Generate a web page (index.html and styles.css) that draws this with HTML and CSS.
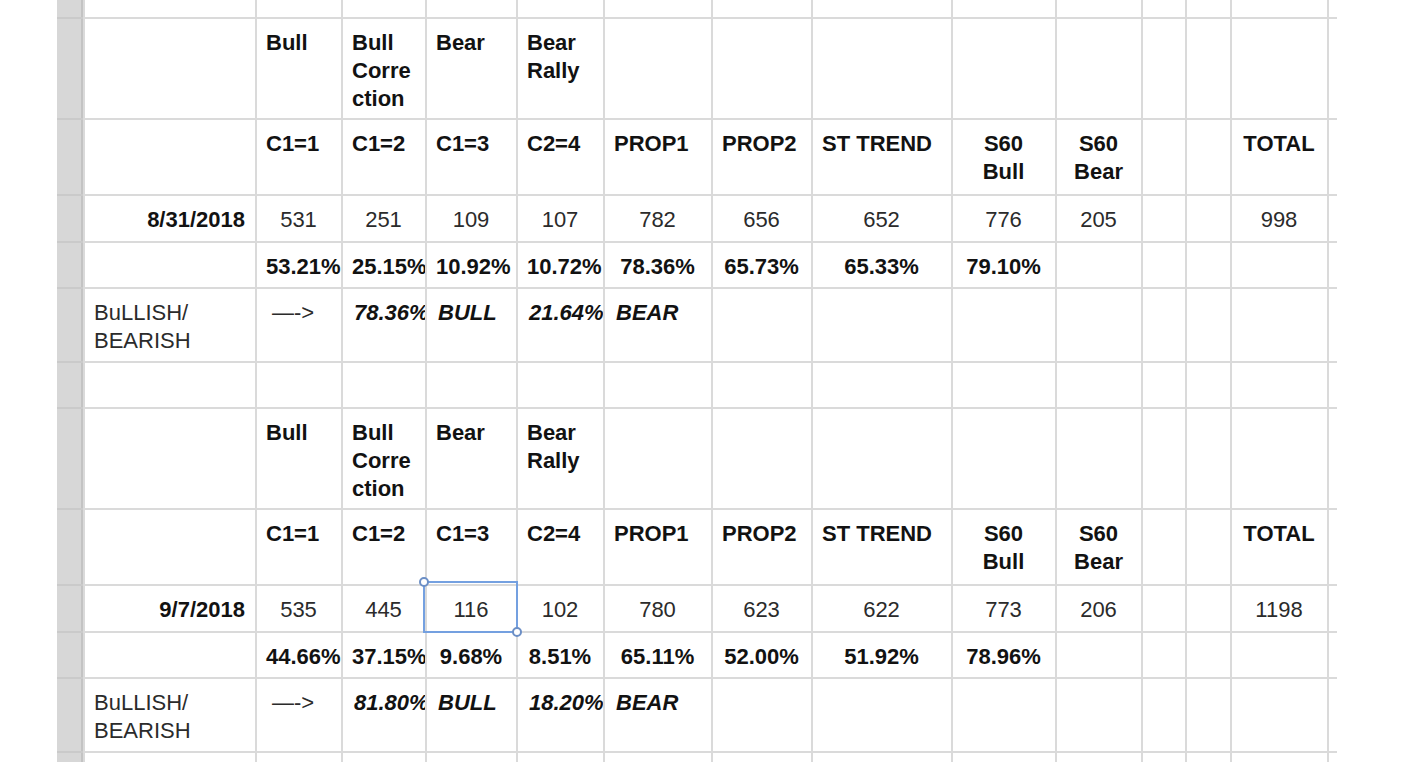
FILE: index.html
```html
<!DOCTYPE html>
<html>
<head>
<meta charset="utf-8">
<title>Sheet</title>
<link rel="stylesheet" href="styles.css">
</head>
<body>
<div class="sheet">
  <!-- row 0 (partial) -->
  <div class="strip"></div><div class="c"></div><div class="c"></div><div class="c"></div><div class="c"></div><div class="c"></div><div class="c"></div><div class="c"></div><div class="c"></div><div class="c"></div><div class="c"></div><div class="c"></div><div class="c"></div><div class="c"></div><div class="c"></div>

  <!-- row 1 -->
  <div class="strip"></div><div class="c"></div>
  <div class="c b">Bull</div><div class="c b">Bull<br>Corre<br>ction</div><div class="c b">Bear</div><div class="c b">Bear<br>Rally</div>
  <div class="c"></div><div class="c"></div><div class="c"></div><div class="c"></div><div class="c"></div><div class="c"></div><div class="c"></div><div class="c"></div><div class="c"></div>

  <!-- row 2 -->
  <div class="strip"></div><div class="c"></div>
  <div class="c b">C1=1</div><div class="c b">C1=2</div><div class="c b">C1=3</div><div class="c b">C2=4</div>
  <div class="c b">PROP1</div><div class="c b">PROP2</div><div class="c b">ST TREND</div>
  <div class="c b mid">S60<br>Bull</div><div class="c b mid">S60<br>Bear</div>
  <div class="c"></div><div class="c"></div><div class="c b mid">TOTAL</div><div class="c"></div>

  <!-- row 3 -->
  <div class="strip"></div><div class="c b end">8/31/2018</div>
  <div class="c n">531</div><div class="c n">251</div><div class="c n">109</div><div class="c n">107</div>
  <div class="c n">782</div><div class="c n">656</div><div class="c n">652</div><div class="c n">776</div><div class="c n">205</div>
  <div class="c"></div><div class="c"></div><div class="c n">998</div><div class="c"></div>

  <!-- row 4 -->
  <div class="strip"></div><div class="c"></div>
  <div class="c b mid">53.21%</div><div class="c b mid">25.15%</div><div class="c b mid">10.92%</div><div class="c b mid">10.72%</div>
  <div class="c b mid">78.36%</div><div class="c b mid">65.73%</div><div class="c b mid">65.33%</div><div class="c b mid">79.10%</div>
  <div class="c"></div><div class="c"></div><div class="c"></div><div class="c"></div><div class="c"></div>

  <!-- row 5 -->
  <div class="strip"></div><div class="c r">BuLLISH/<br>BEARISH</div>
  <div class="c r arrow">—-&gt;</div><div class="c bi">78.36%</div><div class="c bi">BULL</div><div class="c bi">21.64%</div><div class="c bi">BEAR</div>
  <div class="c"></div><div class="c"></div><div class="c"></div><div class="c"></div><div class="c"></div><div class="c"></div><div class="c"></div><div class="c"></div>

  <!-- row 6 (blank) -->
  <div class="strip"></div><div class="c"></div><div class="c"></div><div class="c"></div><div class="c"></div><div class="c"></div><div class="c"></div><div class="c"></div><div class="c"></div><div class="c"></div><div class="c"></div><div class="c"></div><div class="c"></div><div class="c"></div><div class="c"></div>

  <!-- row 7 -->
  <div class="strip"></div><div class="c"></div>
  <div class="c b">Bull</div><div class="c b">Bull<br>Corre<br>ction</div><div class="c b">Bear</div><div class="c b">Bear<br>Rally</div>
  <div class="c"></div><div class="c"></div><div class="c"></div><div class="c"></div><div class="c"></div><div class="c"></div><div class="c"></div><div class="c"></div><div class="c"></div>

  <!-- row 8 -->
  <div class="strip"></div><div class="c"></div>
  <div class="c b">C1=1</div><div class="c b">C1=2</div><div class="c b">C1=3</div><div class="c b">C2=4</div>
  <div class="c b">PROP1</div><div class="c b">PROP2</div><div class="c b">ST TREND</div>
  <div class="c b mid">S60<br>Bull</div><div class="c b mid">S60<br>Bear</div>
  <div class="c"></div><div class="c"></div><div class="c b mid">TOTAL</div><div class="c"></div>

  <!-- row 9 -->
  <div class="strip"></div><div class="c b end">9/7/2018</div>
  <div class="c n">535</div><div class="c n">445</div>
  <div class="c n sel">116<span class="selbox"><span class="knob tl"></span><span class="knob br"></span></span></div>
  <div class="c n">102</div>
  <div class="c n">780</div><div class="c n">623</div><div class="c n">622</div><div class="c n">773</div><div class="c n">206</div>
  <div class="c"></div><div class="c"></div><div class="c n">1198</div><div class="c"></div>

  <!-- row 10 -->
  <div class="strip"></div><div class="c"></div>
  <div class="c b mid">44.66%</div><div class="c b mid">37.15%</div><div class="c b mid">9.68%</div><div class="c b mid">8.51%</div>
  <div class="c b mid">65.11%</div><div class="c b mid">52.00%</div><div class="c b mid">51.92%</div><div class="c b mid">78.96%</div>
  <div class="c"></div><div class="c"></div><div class="c"></div><div class="c"></div><div class="c"></div>

  <!-- row 11 -->
  <div class="strip"></div><div class="c r">BuLLISH/<br>BEARISH</div>
  <div class="c r arrow">—-&gt;</div><div class="c bi">81.80%</div><div class="c bi">BULL</div><div class="c bi">18.20%</div><div class="c bi">BEAR</div>
  <div class="c"></div><div class="c"></div><div class="c"></div><div class="c"></div><div class="c"></div><div class="c"></div><div class="c"></div><div class="c"></div>

  <!-- row 12 (partial) -->
  <div class="strip"></div><div class="c"></div><div class="c"></div><div class="c"></div><div class="c"></div><div class="c"></div><div class="c"></div><div class="c"></div><div class="c"></div><div class="c"></div><div class="c"></div><div class="c"></div><div class="c"></div><div class="c"></div><div class="c"></div>
</div>
</body>
</html>
```

FILE: styles.css
```css
html, body {
  margin: 0;
  padding: 0;
  height: 100%;
  overflow: hidden;
  background: #ffffff;
}

body {
  font-family: "Liberation Sans", Arial, Helvetica, sans-serif;
  font-size: 22px;
  line-height: 28px;
  color: #2b2b2b;
}

.sheet {
  display: grid;
  width: 1280px;
  margin-left: 57px;
  grid-template-columns: 26px 170px 84px 82px 89px 85px 106px 98px 138px 102px 84px 42px 43px 95px 8px;
  grid-template-rows: 17px 99px 74px 45px 44px 72px 44px 99px 74px 45px 44px 72px 20px;
  gap: 2px;
  background: #dadada;
}

.strip {
  background: #d7d7d7;
  border-right: 2px solid #c3c3c3;
  box-shadow: 0 -2px 0 #cacaca;
}

.c {
  background: #ffffff;
  padding: 10px 10px 0 9px;
  overflow: hidden;
  white-space: nowrap;
  text-align: left;
}

.b {
  font-weight: bold;
  color: #121212;
}

.bi {
  font-weight: bold;
  font-style: italic;
  color: #121212;
  padding-left: 11px;
}

.r {
  color: #2b2b2b;
}

.n {
  text-align: center;
  color: #2b2b2b;
}

.mid {
  text-align: center;
}

.end {
  text-align: right;
}

.arrow {
  padding-left: 15px;
}

.sel {
  position: relative;
  overflow: visible;
  z-index: 2;
}

.selbox {
  position: absolute;
  left: -4px;
  top: -5px;
  right: -2px;
  bottom: -2px;
  border: 2px solid #74a0e0;
}

.knob {
  position: absolute;
  width: 10px;
  height: 10px;
  box-sizing: border-box;
  border: 2px solid #6c8fc6;
  border-radius: 50%;
  background: #ffffff;
}

.knob.tl {
  left: -6px;
  top: -6px;
}

.knob.br {
  right: -6px;
  bottom: -6px;
}
```
